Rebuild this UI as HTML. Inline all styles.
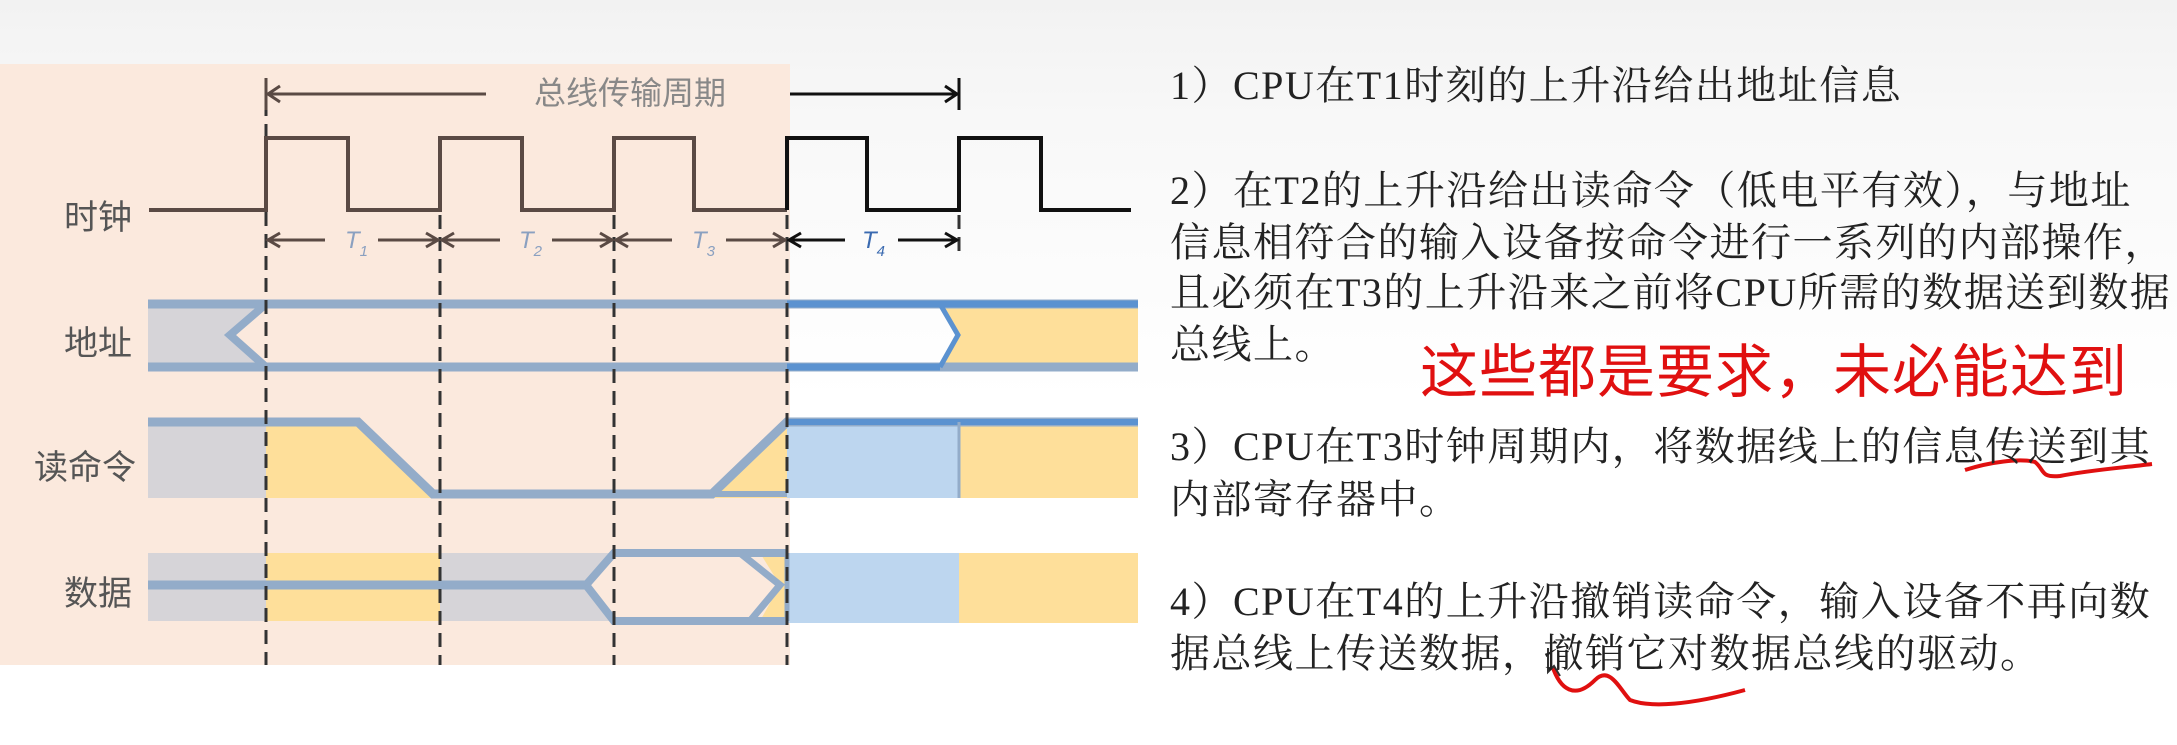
<!DOCTYPE html>
<html><head><meta charset="utf-8"><style>
html,body{margin:0;padding:0;width:2177px;height:745px;overflow:hidden;background:linear-gradient(#f2f2f2 0,#f8f8f8 120px,#fff 400px);}
.t{position:absolute;font-family:"Liberation Serif","Noto Serif CJK SC",serif;font-size:40px;color:#222;white-space:nowrap;left:1170px;letter-spacing:1.5px;}
.l{position:absolute;font-family:"Liberation Sans","Noto Sans CJK SC",sans-serif;font-size:34px;color:#555;}
</style></head><body>
<svg width="2177" height="745" style="position:absolute;left:0;top:0">
<rect x="0" y="64" width="790" height="601" fill="#fbe9dd"/>
<polygon points="148,304 266,304 230,335 266,367 148,367" fill="#d6d4d8"/>
<polygon points="940,304 1138,304 1138,367 940,367 958,335" fill="#fedf9a"/>
<polyline points="148,304 1138,304" stroke="#93acc9" stroke-width="9" fill="none"/>
<polyline points="148,367 1138,367" stroke="#93acc9" stroke-width="9" fill="none"/>
<polyline points="266,304 230,335 266,367" stroke="#93acc9" stroke-width="8" fill="none"/>
<polyline points="940,304 958,335 940,367" stroke="#5b92d0" stroke-width="5" fill="none"/>
<line x1="787" y1="304" x2="1138" y2="304" stroke="#5b92d0" stroke-width="7"/>
<line x1="787" y1="367" x2="940" y2="367" stroke="#5b92d0" stroke-width="7"/>
<rect x="148" y="422" width="118" height="76" fill="#d6d4d8"/>
<polygon points="266,422 358,422 433,498 266,498" fill="#fedf9a"/>
<polygon points="712,498 787,422 787,498" fill="#fedf9a"/>
<rect x="787" y="422" width="172" height="76" fill="#bdd6ef"/>
<rect x="959" y="422" width="179" height="76" fill="#fedf9a"/>
<polyline points="148,422 358,422 433,494 712,494 787,422 1138,422" stroke="#93acc9" stroke-width="9" fill="none"/>
<line x1="712" y1="494" x2="787" y2="494" stroke="#93acc9" stroke-width="6"/>
<line x1="787" y1="422" x2="1138" y2="422" stroke="#5b92d0" stroke-width="6"/>
<line x1="959" y1="422" x2="959" y2="498" stroke="#93acc9" stroke-width="3"/>
<rect x="148" y="553" width="118" height="68" fill="#d6d4d8"/>
<rect x="266" y="553" width="174" height="68" fill="#fedf9a"/>
<polygon points="440,553 614,553 586,585 614,621 440,621" fill="#d6d4d8"/>
<polygon points="760,553 787,553 787,621 760,621 780,585" fill="#fedf9a"/>
<rect x="787" y="553" width="172" height="70" fill="#bdd6ef"/>
<rect x="959" y="553" width="179" height="70" fill="#fedf9a"/>
<line x1="148" y1="585" x2="586" y2="585" stroke="#93acc9" stroke-width="9"/>
<polyline points="586,585 614,553 787,553" stroke="#93acc9" stroke-width="8" fill="none"/>
<polyline points="586,585 614,621 787,621" stroke="#93acc9" stroke-width="8" fill="none"/>
<polyline points="740,553 780,585 750,621" stroke="#93acc9" stroke-width="7" fill="none"/>
<line x1="787" y1="553" x2="787" y2="621" stroke="#93acc9" stroke-width="5"/>
<g stroke="#333" stroke-width="3" stroke-dasharray="14,8">
<line x1="266" y1="80" x2="266" y2="665"/><line x1="440" y1="215" x2="440" y2="665"/>
<line x1="614" y1="215" x2="614" y2="665"/><line x1="787" y1="215" x2="787" y2="665"/>
<line x1="959" y1="215" x2="959" y2="258"/>
</g>
<polyline points="149,210 266,210 266,138 348,138 348,210 440,210 440,138 522,138 522,210 614,210 614,138 694,138 694,210 787,210" stroke="#5a4a44" stroke-width="4" fill="none"/>
<polyline points="787,210 787,138 867,138 867,210 959,210 959,138 1041,138 1041,210 1131,210" stroke="#111" stroke-width="4" fill="none"/>
<line x1="268" y1="94" x2="486" y2="94" stroke="#5a4a44" stroke-width="3"/>
<line x1="790" y1="94" x2="957" y2="94" stroke="#111" stroke-width="3"/>
<polyline points="280,86 268,94 280,102" stroke="#5a4a44" stroke-width="3" fill="none"/>
<polyline points="945,86 957,94 945,102" stroke="#111" stroke-width="3" fill="none"/>
<line x1="266" y1="78" x2="266" y2="110" stroke="#5a4a44" stroke-width="3"/>
<line x1="959" y1="78" x2="959" y2="110" stroke="#111" stroke-width="3"/>
<text x="630" y="104" font-family="Liberation Sans,Noto Sans CJK SC,sans-serif" font-size="32" fill="#888" text-anchor="middle">总线传输周期</text>
<g stroke="#5a4a44" stroke-width="3" fill="none">
<line x1="268" y1="240" x2="325" y2="240"/><line x1="378" y1="240" x2="438" y2="240"/>
<polyline points="280,233 268,240 280,247"/><polyline points="426,233 438,240 426,247"/>
<line x1="442" y1="240" x2="500" y2="240"/><line x1="552" y1="240" x2="612" y2="240"/>
<polyline points="454,233 442,240 454,247"/><polyline points="600,233 612,240 600,247"/>
<line x1="616" y1="240" x2="672" y2="240"/><line x1="726" y1="240" x2="785" y2="240"/>
<polyline points="628,233 616,240 628,247"/><polyline points="773,233 785,240 773,247"/>
</g>
<g stroke="#111" stroke-width="3" fill="none">
<line x1="789" y1="240" x2="845" y2="240"/><line x1="898" y1="240" x2="957" y2="240"/>
<polyline points="801,233 789,240 801,247"/><polyline points="945,233 957,240 945,247"/>
</g>
<g font-family="Liberation Sans,sans-serif" font-style="italic" font-size="24" fill="#8aa0c0">
<text x="345" y="248">T<tspan font-size="15" dy="8">1</tspan></text>
<text x="519" y="248">T<tspan font-size="15" dy="8">2</tspan></text>
<text x="692" y="248">T<tspan font-size="15" dy="8">3</tspan></text>
<text x="862" y="248" fill="#3a6ab0">T<tspan font-size="15" dy="8">4</tspan></text>
</g>
<path d="M1965,470 C1990,462 2020,458 2035,462 C2045,470 2040,478 2060,476 C2090,470 2120,468 2152,464" stroke="#e01010" stroke-width="4" fill="none"/>
<path d="M1552,665 C1560,690 1575,700 1595,680 C1610,665 1620,690 1630,700 C1650,708 1690,705 1745,690" stroke="#e01010" stroke-width="4" fill="none"/>
<path d="M1548,648 L1548,672 L1554,666 L1560,676" stroke="#333" stroke-width="2" fill="#fff"/>
</svg>
<div class="l" style="left:64px;top:190px">时钟</div>
<div class="l" style="left:64px;top:316px">地址</div>
<div class="l" style="left:34px;top:440px">读命令</div>
<div class="l" style="left:64px;top:566px">数据</div>
<div class="t" style="top:54px">1）CPU在T1时刻的上升沿给出地址信息</div>
<div class="t" style="top:159px">2）在T2的上升沿给出读命令（低电平有效），与地址</div>
<div class="t" style="top:211px">信息相符合的输入设备按命令进行一系列的内部操作，</div>
<div class="t" style="top:261px">且必须在T3的上升沿来之前将CPU所需的数据送到数据</div>
<div class="t" style="top:313px">总线上。</div>
<div class="t" style="top:415px">3）CPU在T3时钟周期内，将数据线上的信息传送到其</div>
<div class="t" style="top:468px">内部寄存器中。</div>
<div class="t" style="top:570px">4）CPU在T4的上升沿撤销读命令，输入设备不再向数</div>
<div class="t" style="top:622px">据总线上传送数据，撤销它对数据总线的驱动。</div>
<div style="position:absolute;left:1420px;top:325px;font-family:'Liberation Sans','Noto Sans CJK SC',sans-serif;font-size:58px;color:#e01010;white-space:nowrap;letter-spacing:1px">这些都是要求，未必能达到</div>
</body></html>
